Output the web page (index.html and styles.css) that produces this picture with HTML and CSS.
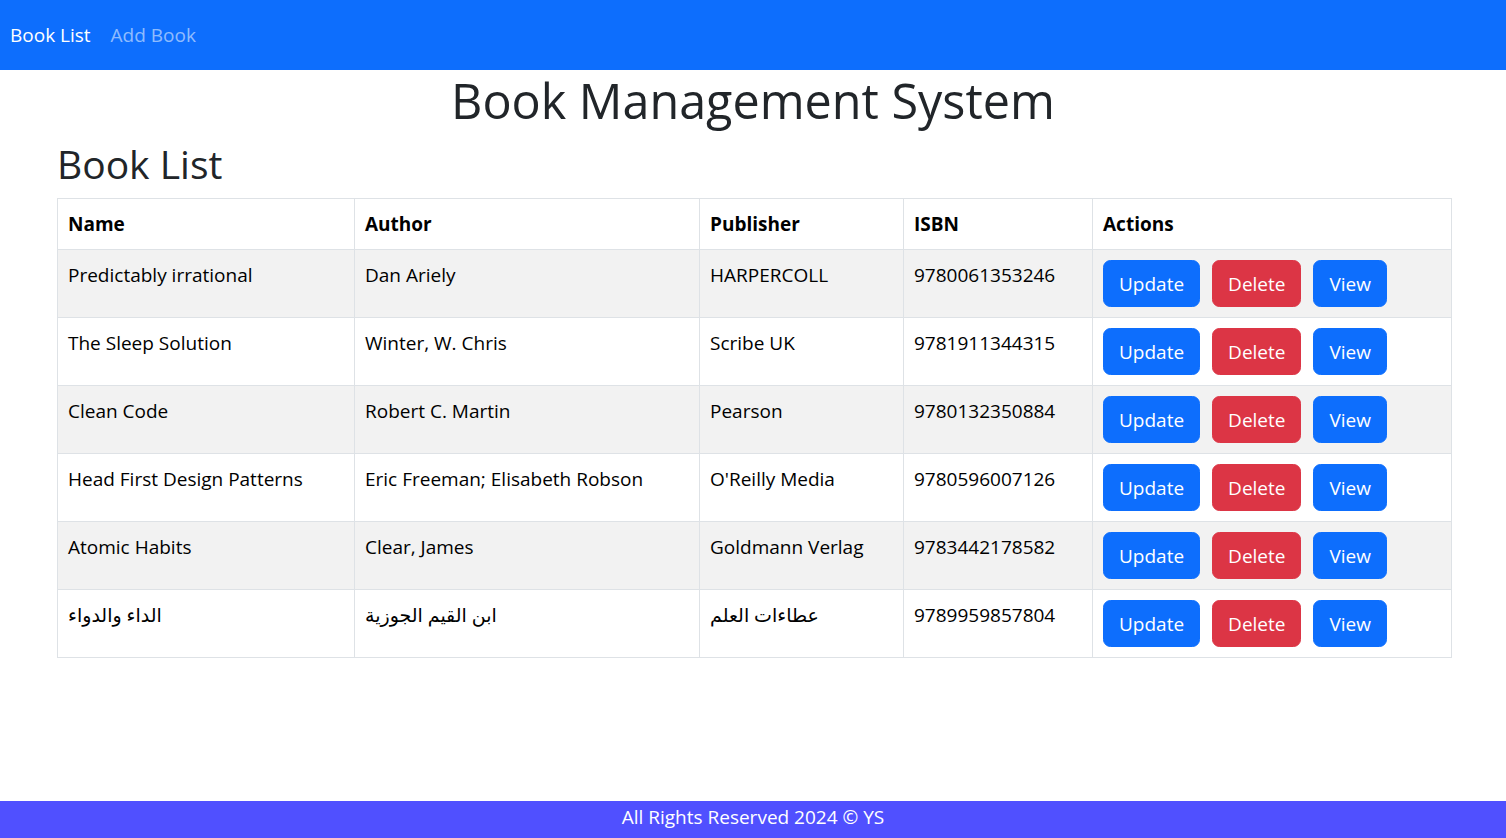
FILE: index.html
```html
<!DOCTYPE html>
<html lang="en">
<head>
<meta charset="utf-8">
<title>Book Management System</title>
<link rel="stylesheet" href="styles.css">
</head>
<body>
<nav class="navbar">
  <a class="nav-link active" href="#">Book List</a>
  <a class="nav-link" href="#">Add Book</a>
</nav>
<main class="page">
  <h1 class="title">Book Management System</h1>
  <div class="container">
    <h2 class="subtitle">Book List</h2>
    <table class="table">
      <thead>
        <tr>
          <th class="c-name">Name</th>
          <th class="c-author">Author</th>
          <th class="c-pub">Publisher</th>
          <th class="c-isbn">ISBN</th>
          <th class="c-act">Actions</th>
        </tr>
      </thead>
      <tbody>
        <tr class="odd">
          <td>Predictably irrational</td><td>Dan Ariely</td><td>HARPERCOLL</td><td>9780061353246</td>
          <td><div class="actions"><button class="btn blue">Update</button><button class="btn red">Delete</button><button class="btn blue">View</button></div></td>
        </tr>
        <tr>
          <td>The Sleep Solution</td><td>Winter, W. Chris</td><td>Scribe UK</td><td>9781911344315</td>
          <td><div class="actions"><button class="btn blue">Update</button><button class="btn red">Delete</button><button class="btn blue">View</button></div></td>
        </tr>
        <tr class="odd">
          <td>Clean Code</td><td>Robert C. Martin</td><td>Pearson</td><td>9780132350884</td>
          <td><div class="actions"><button class="btn blue">Update</button><button class="btn red">Delete</button><button class="btn blue">View</button></div></td>
        </tr>
        <tr>
          <td>Head First Design Patterns</td><td>Eric Freeman; Elisabeth Robson</td><td>O'Reilly Media</td><td>9780596007126</td>
          <td><div class="actions"><button class="btn blue">Update</button><button class="btn red">Delete</button><button class="btn blue">View</button></div></td>
        </tr>
        <tr class="odd">
          <td>Atomic Habits</td><td>Clear, James</td><td>Goldmann Verlag</td><td>9783442178582</td>
          <td><div class="actions"><button class="btn blue">Update</button><button class="btn red">Delete</button><button class="btn blue">View</button></div></td>
        </tr>
        <tr>
          <td>الداء والدواء</td><td>ابن القيم الجوزية</td><td>عطاءات العلم</td><td>9789959857804</td>
          <td><div class="actions"><button class="btn blue">Update</button><button class="btn red">Delete</button><button class="btn blue">View</button></div></td>
        </tr>
      </tbody>
    </table>
  </div>
</main>
<footer class="footer">All Rights Reserved 2024 © YS</footer>
</body>
</html>
```
FILE: styles.css
```css
* { box-sizing: border-box; }
html, body { margin: 0; padding: 0; }
body {
  font-family: "Open Sans", "DejaVu Sans", sans-serif;
  font-size: 19px;
  line-height: 1.5;
  color: #212529;
  background: #fff;
  min-height: 100vh;
  display: flex;
  flex-direction: column;
}
.navbar {
  background: #0d6efd;
  height: 70px;
  padding: 10px 0;
  display: flex;
  align-items: center;
}
.nav-link {
  display: block;
  padding: 10px;
  line-height: 30px;
  color: rgba(255,255,255,0.55);
  text-decoration: none;
}
.nav-link.active { color: #fff; }
.page { flex: 1; }
.title {
  margin: 0 0 10px;
  text-align: center;
  font-size: 48.5px;
  font-weight: 500;
  line-height: 60px;
}
.container {
  margin: 0 54px 0 57px;
}
.subtitle {
  margin: 0 0 10px;
  font-size: 39px;
  font-weight: 500;
  line-height: 48px;
}
.table {
  width: 100%;
  border-collapse: collapse;
  table-layout: fixed;
  color: #000;
}
.table th, .table td {
  border: 1px solid #dee2e6;
  padding: 10px;
  text-align: left;
  vertical-align: top;
  line-height: 30px;
}
.table th { font-weight: 700; }
.table tr.odd td { background: #f2f2f2; }
.c-name { width: 297px; }
.c-author { width: 345px; }
.c-pub { width: 204px; }
.c-isbn { width: 189px; }
.actions { display: flex; gap: 12px; }
.btn {
  font-family: inherit;
  font-size: 19px;
  line-height: 30px;
  padding: 7.5px 15px;
  border: 1px solid transparent;
  border-radius: 7.5px;
  color: #fff;
}
.btn.blue { background: #0d6efd; border-color: #0d6efd; }
.btn.red { background: #dc3545; border-color: #dc3545; }
.footer {
  background: #5050ff;
  color: #fff;
  text-align: center;
  height: 37px;
  line-height: 32px;
}
```
